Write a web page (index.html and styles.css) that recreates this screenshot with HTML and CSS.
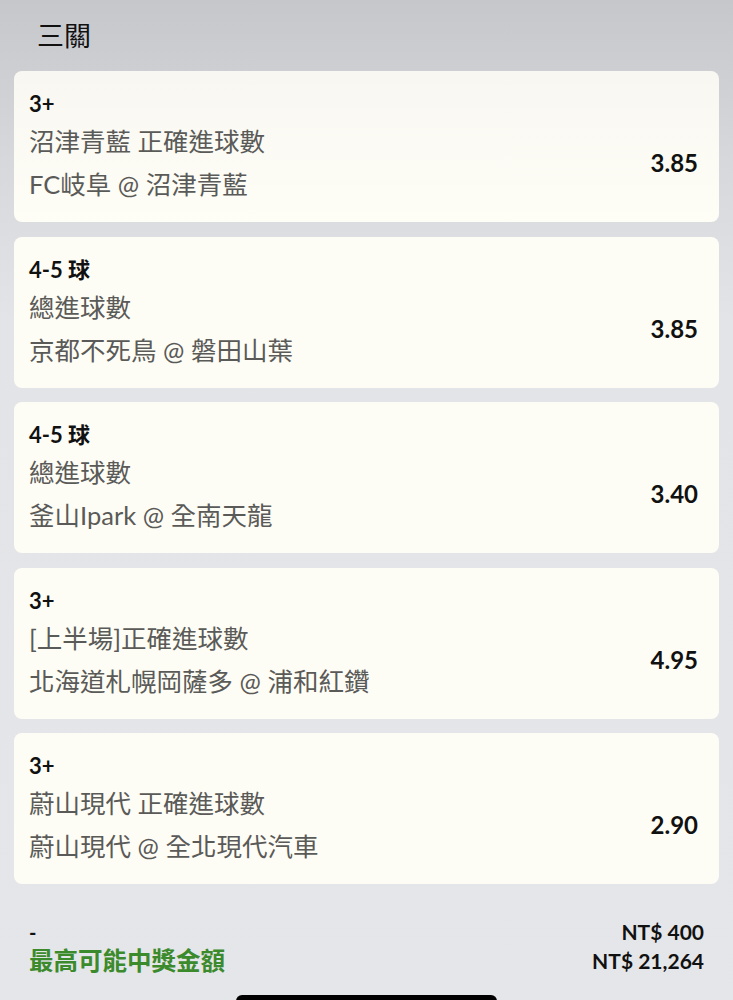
FILE: index.html
```html
<!DOCTYPE html>
<html lang="zh-Hant">
    <head>
        <meta charset="utf-8">
        <title>三關</title>
        <link rel="stylesheet" href="styles.css">
    </head>
    <body>
        <div class="page">
            <div class="header">三關</div>

            <!-- list of selections -->
            <div class="legs">
                <div class="leg">
                    <div class="info">
                        <div class="pick">3+</div>
                        <div class="market">沼津青藍 正確進球數</div>
                        <div class="match">FC岐阜 @ 沼津青藍</div>
                    </div>
                    <div class="odds">3.85</div>
                </div>
                <div class="leg">
                    <div class="info">
                        <div class="pick">4-5 球</div>
                        <div class="market">總進球數</div>
                        <div class="match">京都不死鳥 @ 磐田山葉</div>
                    </div>
                    <div class="odds">3.85</div>
                </div>
                <div class="leg">
                    <div class="info">
                        <div class="pick">4-5 球</div>
                        <div class="market">總進球數</div>
                        <div class="match">釜山Ipark @ 全南天龍</div>
                    </div>
                    <div class="odds">3.40</div>
                </div>
                <div class="leg">
                    <div class="info">
                        <div class="pick">3+</div>
                        <div class="market">[上半場]正確進球數</div>
                        <div class="match">北海道札幌岡薩多 @ 浦和紅鑽</div>
                    </div>
                    <div class="odds">4.95</div>
                </div>
                <div class="leg">
                    <div class="info">
                        <div class="pick">3+</div>
                        <div class="market">蔚山現代 正確進球數</div>
                        <div class="match">蔚山現代 @ 全北現代汽車</div>
                    </div>
                    <div class="odds">2.90</div>
                </div>
            </div>

            <!-- stake and return -->
            <div class="summary">
                <div class="row">
                    <span class="dash">-</span>
                    <span class="amount">NT$ 400</span>
                </div>
                <div class="row">
                    <span class="payout-label">最高可能中獎金額</span>
                    <span class="amount">NT$ 21,264</span>
                </div>
            </div>
        </div>
        <div class="home-bar"></div>
    </body>
</html>
```

FILE: styles.css
```css
body {
    margin: 0;
    background: linear-gradient(to bottom, #c6c7cb 0px, #d6d7da 150px, #e3e4e7 320px, #e5e6e9 100%);
    font-family: Lato, "Noto Sans CJK TC", sans-serif;
    min-height: 1000px;
}

.page {
    padding: 0 14px;
}

.header {
    height: 71px;
    line-height: 72px;
    padding-left: 23px;
    font-size: 27px;
    color: #111;
}

.legs {
    display: flex;
    flex-direction: column;
    gap: 14.5px;
}

.leg {
    display: flex;
    align-items: center;
    justify-content: space-between;
    height: 151px;
    box-sizing: border-box;
    padding: 0 21px 0 15px;
    background: linear-gradient(to bottom, #f8f7f1, #fefdf6);
    border-radius: 8px;
}

.leg + .leg {
    background: #fefdf5;
}

.info {
    display: flex;
    flex-direction: column;
    padding-top: 1px;
}

.pick {
    font-size: 22px;
    font-weight: bold;
    color: #111;
    line-height: 28px;
}

.market {
    font-size: 25.5px;
    color: #5a5a58;
    line-height: 46px;
}

.match {
    font-size: 25.5px;
    color: #5a5a58;
    line-height: 40px;
}

.odds {
    margin-top: 32px;
    font-size: 24px;
    font-weight: bold;
    color: #111;
}

.summary {
    padding: 33px 15px 0 15px;
}

.row {
    display: flex;
    justify-content: space-between;
    align-items: center;
}

.dash {
    font-size: 20px;
    font-weight: bold;
    color: #111;
    line-height: 28px;
}

.amount {
    font-size: 21px;
    font-weight: bold;
    color: #111;
    line-height: 29px;
}

.payout-label {
    font-size: 24.5px;
    font-weight: bold;
    color: #3b8a2c;
    line-height: 29px;
}

.home-bar {
    position: fixed;
    left: 236px;
    top: 995px;
    width: 261px;
    height: 12px;
    background: #000;
    border-radius: 6px;
}
```
